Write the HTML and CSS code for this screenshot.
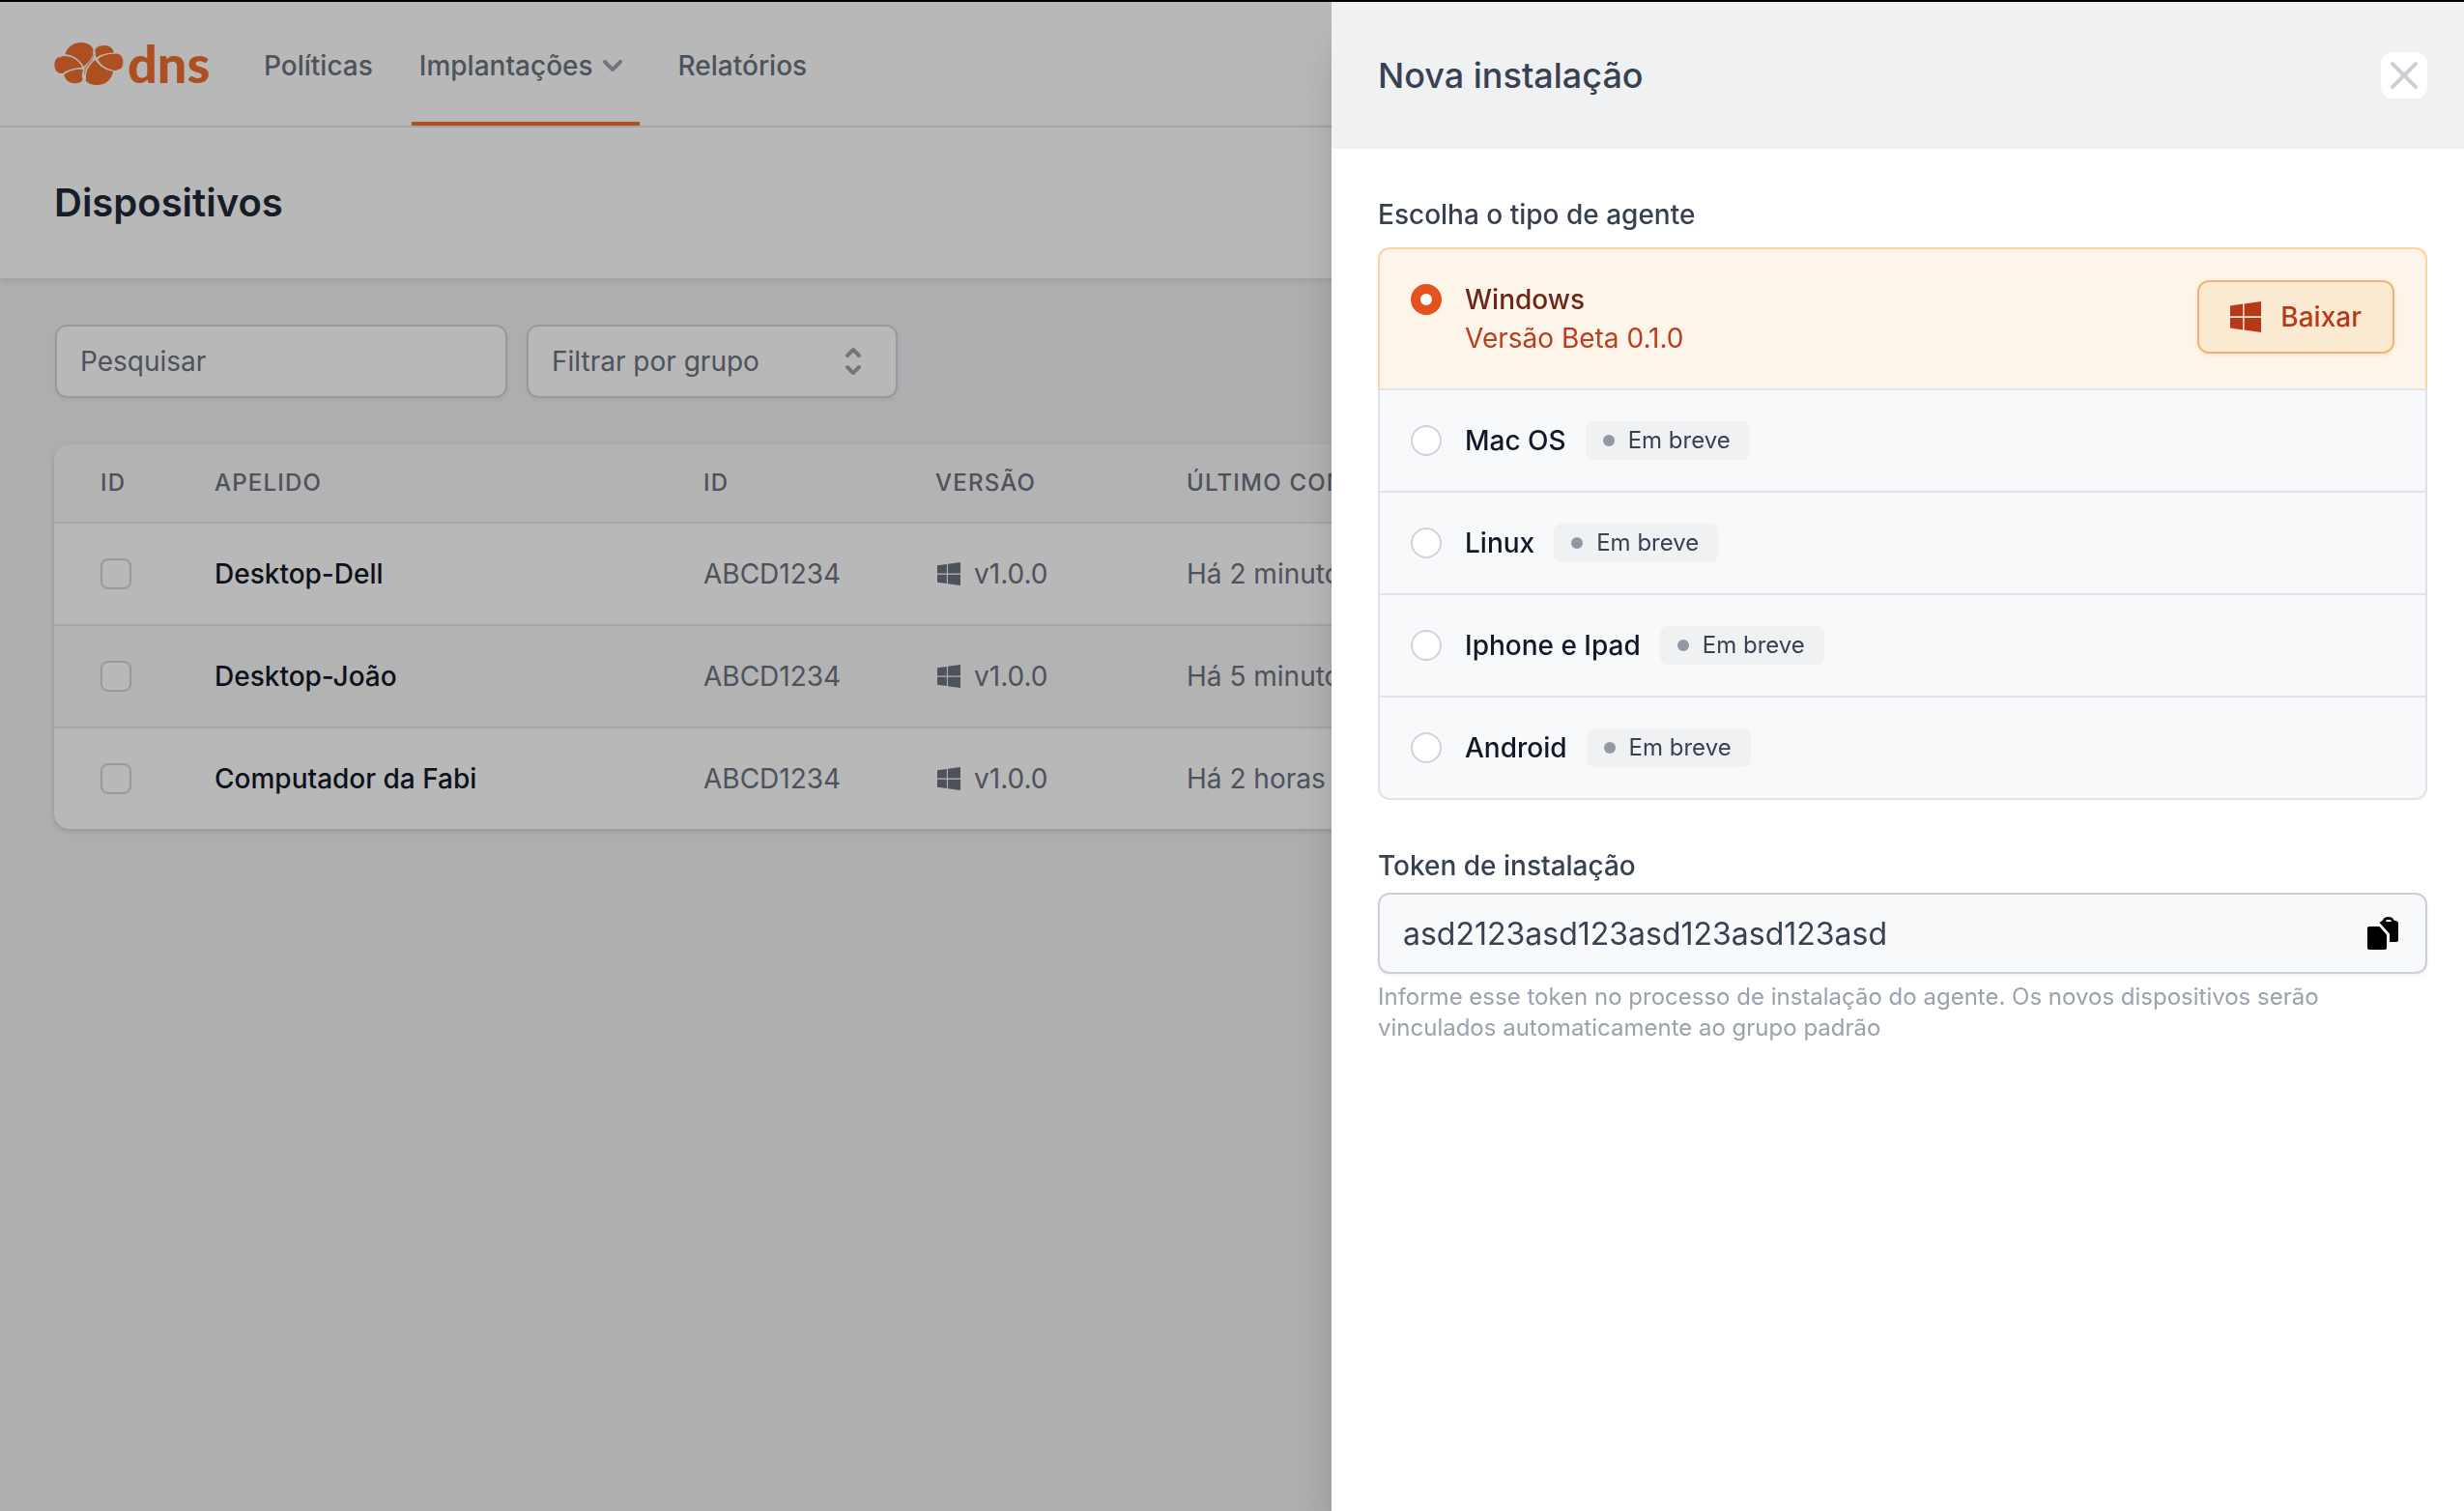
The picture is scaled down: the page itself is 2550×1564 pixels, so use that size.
FILE: index.html
```html
<!DOCTYPE html>
<html lang="pt-BR">
<head>
    <meta charset="UTF-8">
    <meta name="viewport" content="width=device-width, initial-scale=1.0">
    <title>Dispositivos</title>
    <link rel="stylesheet" href="styles.css">
</head>
<body>
    <!-- Shared icons -->
    <svg class="sprite" aria-hidden="true">
        <symbol id="icon-windows" viewBox="0 32 448 448">
            <path d="M0 93.7l183.6-25.3v177.4H0V93.7zm0 324.6l183.6 25.3V268.4H0v149.9zm203.8 28L448 480V268.4H203.8v177.9zm0-380.6v180.1H448V32L203.8 65.7z"/>
        </symbol>
    </svg>

    <nav class="navbar">
        <a class="logo" href="#">
            <svg class="logo-mark" viewBox="48 42 214 132" aria-hidden="true">
                <path d="M81 79C88 55 108 42 130 42c20 0 35 10 38 20 1 4-1 6 0 9 1 17-14 32-29 46-12-22-33-37-58-38z"/>
                <path d="M54 92c5-6 11-3 15-5 3-2 4-3 8-3 26 0 49 14 57 35-18 1-37 5-50 12-4 0-4 4-9 6-8 2-15 0-20-5-9-11-9-30-1-40z"/>
                <path d="M78 142c17-14 40-18 59-16-2 10-5 17-3 24 2 5 2 8-1 12-8 7-19 8-29 6-14-2-24-12-26-26z"/>
                <path d="M146 150c-2-20 13-42 29-54 13 20 33 33 55 35-3 24-22 43-50 43-15 0-27-4-34-12-1-4 1-7 0-12z"/>
                <path d="M174 68c-1-8 11-17 28-17 17 0 29 9 30 23-20 0-39 4-54 15-3-7-2-14-4-21z"/>
                <path d="M182 94c13-11 31-18 49-17 6 2 5-2 12 0 4 0 6 2 9 3 10 6 12 28 5 40-4 5-9 4-13 7-5 3-7 1-13 1-20-3-38-14-49-34z"/>
                <path class="logo-vein" d="M140 142c3-19 12-34 22-46 6-7 9-12 9-18M139 124c11-8 21-18 29-30"/>
            </svg>
            <span class="logo-name">dns</span>
        </a>
        <a class="nav-link" href="#">Políticas</a>
        <a class="nav-link active" href="#">Implantações
            <svg class="icon-chevron" viewBox="0 0 20 20" aria-hidden="true"><path d="M5.293 7.293a1 1 0 011.414 0L10 10.586l3.293-3.293a1 1 0 111.414 1.414l-4 4a1 1 0 01-1.414 0l-4-4a1 1 0 010-1.414z"/></svg>
        </a>
        <a class="nav-link" href="#">Relatórios</a>
    </nav>

    <header class="page-header">
        <h1>Dispositivos</h1>
    </header>

    <main class="content">
        <div class="filters">
            <input class="search" type="text" placeholder="Pesquisar" aria-label="Pesquisar">
            <div class="select-wrap">
                <select aria-label="Filtrar por grupo">
                    <option>Filtrar por grupo</option>
                </select>
                <svg class="icon-selector" viewBox="0 0 20 20" aria-hidden="true"><path d="M10 3a1 1 0 01.707.293l3 3a1 1 0 01-1.414 1.414L10 5.414 7.707 7.707a1 1 0 01-1.414-1.414l3-3A1 1 0 0110 3zm-3.707 9.293a1 1 0 011.414 0L10 14.586l2.293-2.293a1 1 0 011.414 1.414l-3 3a1 1 0 01-1.414 0l-3-3a1 1 0 010-1.414z"/></svg>
            </div>
        </div>

        <table class="devices">
            <colgroup>
                <col class="col-check">
                <col class="col-name">
                <col class="col-id">
                <col class="col-version">
                <col>
            </colgroup>
            <thead>
                <tr>
                    <th>ID</th>
                    <th>Apelido</th>
                    <th>ID</th>
                    <th>Versão</th>
                    <th>Último contato</th>
                </tr>
            </thead>
            <tbody>
                <tr>
                    <td><input type="checkbox" aria-label="Desktop-Dell"></td>
                    <td class="name">Desktop-Dell</td>
                    <td>ABCD1234</td>
                    <td><span class="version"><svg class="icon-os"><use href="#icon-windows"/></svg>v1.0.0</span></td>
                    <td>Há 2 minutos</td>
                </tr>
                <tr>
                    <td><input type="checkbox" aria-label="Desktop-João"></td>
                    <td class="name">Desktop-João</td>
                    <td>ABCD1234</td>
                    <td><span class="version"><svg class="icon-os"><use href="#icon-windows"/></svg>v1.0.0</span></td>
                    <td>Há 5 minutos</td>
                </tr>
                <tr>
                    <td><input type="checkbox" aria-label="Computador da Fabi"></td>
                    <td class="name">Computador da Fabi</td>
                    <td>ABCD1234</td>
                    <td><span class="version"><svg class="icon-os"><use href="#icon-windows"/></svg>v1.0.0</span></td>
                    <td>Há 2 horas</td>
                </tr>
            </tbody>
        </table>
    </main>

    <div class="overlay"></div>

    <aside class="drawer" role="dialog" aria-labelledby="drawer-title">
        <div class="drawer-header">
            <h2 id="drawer-title">Nova instalação</h2>
            <button class="close" type="button" aria-label="Fechar">
                <svg viewBox="0 0 24 24" aria-hidden="true"><path d="M6 18L18 6M6 6l12 12"/></svg>
            </button>
        </div>

        <div class="drawer-body">
            <fieldset class="agents">
                <legend>Escolha o tipo de agente</legend>
                <div class="agent selected">
                    <input type="radio" name="agent" id="agent-windows" checked>
                    <label for="agent-windows">Windows<span class="agent-version">Versão Beta 0.1.0</span></label>
                    <button class="download" type="button"><svg aria-hidden="true"><use href="#icon-windows"/></svg>Baixar</button>
                </div>
                <div class="agent">
                    <input type="radio" name="agent" id="agent-mac">
                    <label for="agent-mac">Mac OS</label>
                    <span class="badge">Em breve</span>
                </div>
                <div class="agent">
                    <input type="radio" name="agent" id="agent-linux">
                    <label for="agent-linux">Linux</label>
                    <span class="badge">Em breve</span>
                </div>
                <div class="agent">
                    <input type="radio" name="agent" id="agent-ios">
                    <label for="agent-ios">Iphone e Ipad</label>
                    <span class="badge">Em breve</span>
                </div>
                <div class="agent">
                    <input type="radio" name="agent" id="agent-android">
                    <label for="agent-android">Android</label>
                    <span class="badge">Em breve</span>
                </div>
            </fieldset>

            <div class="token">
                <label for="token">Token de instalação</label>
                <div class="token-box">
                    <input type="text" id="token" value="asd2123asd123asd123asd123asd" readonly>
                    <button class="copy" type="button" aria-label="Copiar">
                        <svg viewBox="0 0 32 34" aria-hidden="true">
                            <path d="M2 10h10.500L20 18.500V32a2 2 0 01-2 2H2a2 2 0 01-2-2V12a2 2 0 012-2z"/>
                            <path fill-rule="evenodd" d="M12.500 6L16 3.500C16.500 1.500 18.500 0 21.700 0s5.200 1.500 5.700 3.500L30.500 4.500A2 2 0 0132 6.500V24a2 2 0 01-2 2h-7v-8.500zM19 5h6a2 2 0 00-2-2h-2a2 2 0 00-2 2z"/>
                        </svg>
                    </button>
                </div>
                <p class="help">Informe esse token no processo de instalação do agente. Os novos dispositivos serão vinculados automaticamente ao grupo padrão</p>
            </div>
        </div>
    </aside>
</body>
</html>
```
FILE: styles.css
```css
* {
    box-sizing: border-box;
}
body {
    margin: 0;
    min-height: 100vh;
    border-top: 2px solid #000;
    background-color: #f0f1f4;
    color: #6b7280;
    font-family: Inter, "Liberation Sans", sans-serif;
    font-size: 28px;
    line-height: 40px;
}
h1, h2, p {
    margin: 0;
}
button, input, select {
    margin: 0;
    font: inherit;
    color: inherit;
}
button {
    cursor: pointer;
}
svg {
    display: block;
    flex: none;
    fill: currentColor;
}
.sprite {
    position: absolute;
    width: 0;
    height: 0;
}

/* Navigation */
.navbar {
    display: flex;
    gap: 32px;
    height: 130px;
    padding: 0 56px;
    background-color: #fff;
    border-bottom: 2px solid #e5e7eb;
}
.logo {
    display: flex;
    align-items: center;
    gap: 4px;
    width: 161px;
    margin-right: 16px;
    color: #f0702f;
    text-decoration: none;
}
.logo-mark {
    width: 72px;
    height: 44px;
}
.logo-vein {
    fill: none;
    stroke: currentColor;
    stroke-width: 2;
}
.logo-name {
    font-family: Lato, sans-serif;
    font-size: 54px;
    font-weight: 900;
}
.nav-link {
    display: flex;
    align-items: center;
    padding: 8px 8px 0;
    border-bottom: 4px solid transparent;
    color: #6b7280;
    font-weight: 500;
    text-decoration: none;
}
.nav-link.active {
    border-color: #f97025;
}
.icon-chevron {
    width: 40px;
    height: 40px;
    color: #9ca3af;
}

/* Page */
.page-header {
    padding: 48px 56px;
    background-color: #fff;
    box-shadow: 0 2px 6px rgba(0, 0, 0, 0.1);
}
.page-header h1 {
    color: #1f2937;
    font-size: 40px;
    font-weight: 600;
    line-height: 60px;
}
.content {
    padding: 48px 56px;
}
.filters {
    display: flex;
    gap: 20px;
    margin-bottom: 48px;
    padding-left: 1px;
}
.search, .select-wrap select {
    padding: 16px 24px;
    height: 76px;
    background-color: #fff;
    border: 2px solid #d1d5db;
    border-radius: 12px;
    box-shadow: 0 2px 4px rgba(0, 0, 0, 0.05);
}
.search {
    width: 468px;
}
.search::placeholder {
    color: #6b7280;
    opacity: 1;
}
.select-wrap {
    position: relative;
    width: 384px;
}
.select-wrap select {
    width: 100%;
    appearance: none;
}
.icon-selector {
    position: absolute;
    top: 18px;
    right: 26px;
    width: 40px;
    height: 40px;
    color: #9ca3af;
    pointer-events: none;
}

.devices {
    width: 100%;
    table-layout: fixed;
    border-spacing: 0;
    border-radius: 16px;
    overflow: hidden;
    background-color: #fff;
    box-shadow: 0 2px 6px rgba(0, 0, 0, 0.1), 0 2px 4px rgba(0, 0, 0, 0.06);
}
.col-check {
    width: 118px;
}
.col-name {
    width: 506px;
}
.col-id {
    width: 240px;
}
.col-version {
    width: 260px;
}
.devices th {
    padding: 24px 0 24px 48px;
    background-color: #f8f8f9;
    border-bottom: 2px solid #e5e5eb;
    font-size: 24px;
    font-weight: 500;
    line-height: 32px;
    letter-spacing: 0.05em;
    text-align: left;
    text-transform: uppercase;
}
.devices td {
    padding: 32px 0 32px 48px;
    border-bottom: 2px solid #e5e5eb;
}
.devices tr:last-child td {
    border-bottom: 0;
}
.devices tr:nth-child(even) td {
    background-color: #f8f8f9;
}
.devices .name {
    color: #111827;
    font-weight: 500;
}
.devices input {
    display: block;
    width: 32px;
    height: 32px;
    appearance: none;
    background-color: #fff;
    border: 2px solid #d1d5db;
    border-radius: 8px;
}
.version {
    display: flex;
    align-items: center;
    gap: 12px;
}
.icon-os {
    width: 28px;
    height: 24px;
}

/* Drawer */
.overlay {
    position: fixed;
    inset: 2px 0 0;
    background-color: rgba(0, 0, 0, 0.28);
}
.drawer {
    position: fixed;
    inset: 2px 0 0 auto;
    width: 100%;
    max-width: 1172px;
    background-color: #fff;
    color: #374151;
    box-shadow: 0 40px 50px -10px rgba(0, 0, 0, 0.2), 0 20px 20px -10px rgba(0, 0, 0, 0.1);
}
.drawer-header {
    display: flex;
    align-items: center;
    justify-content: space-between;
    padding: 48px 38px 48px 48px;
    background-color: #f0f1f3;
}
.drawer-header h2 {
    font-size: 36px;
    font-weight: 500;
    line-height: 56px;
}
.close {
    padding: 0;
    background-color: #fff;
    border: 0;
    border-radius: 12px;
    color: #cdcfd7;
}
.close svg {
    width: 48px;
    height: 48px;
    fill: none;
    stroke: currentColor;
    stroke-width: 2;
    stroke-linecap: round;
}
.drawer-body {
    display: flex;
    flex-direction: column;
    gap: 48px;
    padding: 48px 38px 48px 48px;
}
.agents {
    min-width: 0;
    margin: 0;
    padding: 0;
    border: 0;
}
.agents legend {
    padding: 0;
    margin-bottom: 14px;
    font-weight: 500;
}
.agent {
    display: flex;
    align-items: flex-start;
    padding: 32px;
    background-color: #f8f9fb;
    border: 2px solid #e1e3e9;
    border-top: 0;
    color: #111827;
    font-weight: 500;
}
.agent:last-child {
    border-radius: 0 0 12px 12px;
}
.agent.selected {
    background-color: #fef5ea;
    border-top: 2px solid #fcd3a2;
    border-left-color: #fcd3a2;
    border-right-color: #fcd3a2;
    border-radius: 12px 12px 0 0;
    color: #6c2716;
}
.agent input {
    flex: none;
    width: 32px;
    height: 32px;
    margin: 4px 24px 0 0;
    appearance: none;
    background-color: #fff;
    border: 2px solid #d1d2da;
    border-radius: 50%;
}
.agent input:checked {
    border: 10px solid #e4521f;
}
.agent-version {
    display: block;
    color: #bb3e1c;
    font-weight: 400;
}
.download {
    display: flex;
    align-items: center;
    gap: 20px;
    margin-left: auto;
    padding: 16px 32px;
    background-color: #fdead3;
    border: 2px solid #fbb06d;
    border-radius: 12px;
    box-shadow: 0 2px 4px rgba(0, 0, 0, 0.05);
    color: #b63a1a;
    font-weight: 500;
}
.download svg {
    width: 32px;
    height: 32px;
}
.badge {
    display: flex;
    align-items: center;
    gap: 14px;
    margin-left: 20px;
    padding: 4px 20px 4px 18px;
    background-color: #f0f1f3;
    border-radius: 8px;
    color: #374151;
    font-size: 24px;
    font-weight: 400;
    line-height: 32px;
}
.badge::before {
    content: "";
    width: 12px;
    height: 12px;
    background-color: #9299a6;
    border-radius: 50%;
}

.token label {
    display: block;
    margin-bottom: 8px;
    font-weight: 500;
}
.token-box {
    display: flex;
    align-items: center;
    padding: 0 22px 0 24px;
    background-color: #f8f9fb;
    border: 2px solid #cdcfd7;
    border-radius: 12px;
    box-shadow: 0 2px 4px rgba(0, 0, 0, 0.05);
}
.token-box input {
    flex: 1;
    min-width: 0;
    height: 80px;
    padding: 0;
    background: none;
    border: 0;
    font-size: 32px;
    font-optical-sizing: none;
}
.copy {
    padding: 6px;
    background: none;
    border: 0;
    color: #000;
}
.copy svg {
    width: 32px;
    height: 34px;
}
.help {
    margin-top: 8px;
    color: #9aa1ae;
    font-size: 24px;
    line-height: 32px;
}
```
